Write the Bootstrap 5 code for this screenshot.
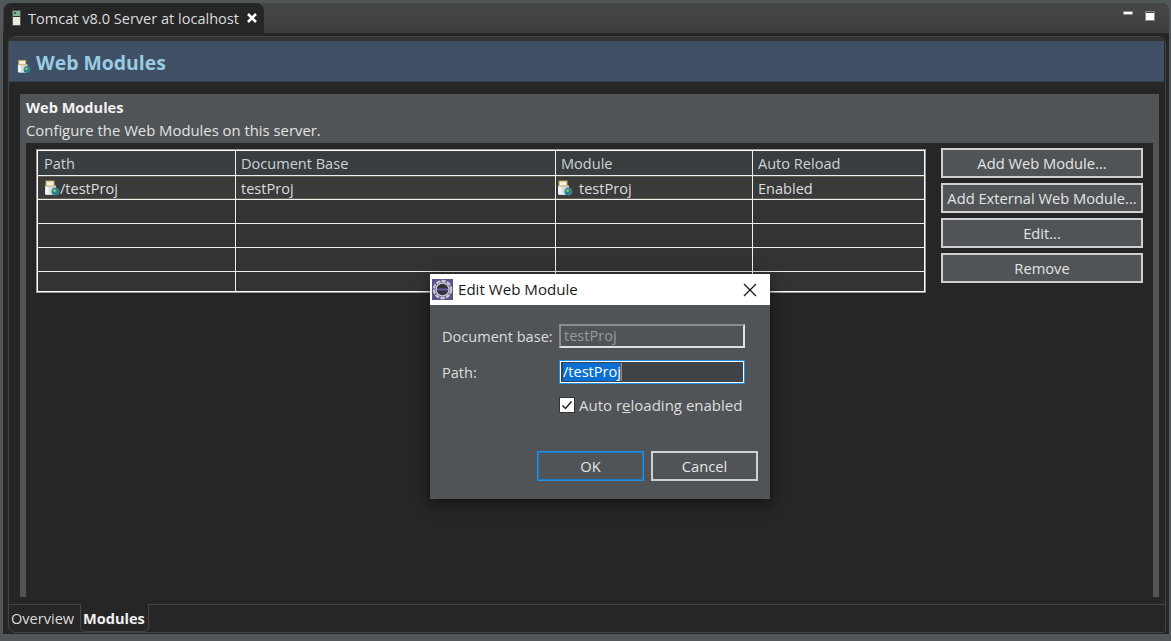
<!DOCTYPE html>
<html lang="en">
<head>
<meta charset="utf-8">
<title>Tomcat v8.0 Server at localhost</title>
<link href="https://cdn.jsdelivr.net/npm/bootstrap@5.3.0/dist/css/bootstrap.min.css" rel="stylesheet">
<style>
html,body{height:641px;overflow:hidden}
body{background:#515658;color:#ddd;font-family:"Open Sans","Noto Sans","Liberation Sans",sans-serif;font-size:14.55px;line-height:20px;position:relative}
.shell{height:631px;margin:3px 2px 7px 3px;background:#262626;border-radius:8px 8px 0 0;display:flex;flex-direction:column}
.strip{height:30px;flex:none;background:linear-gradient(#474747,#3d3d3d);border-radius:8px 8px 0 0;display:flex;justify-content:space-between}
.etab{width:260px;background:#262626;border-radius:8px 8px 0 0;display:flex;align-items:center;padding:0 0 0 8px;gap:7px;color:#ddd;white-space:nowrap;margin-left:1px}
.closex{flex:none;margin-left:1px}
.winbtns{display:flex;gap:12px;padding:8px 14px 0 0;align-items:flex-start}
.editor{flex:1;margin:3px 3px 1px 5px;border:1px solid #444;border-radius:8px 8px 3px 8px;background:#262626;display:flex;flex-direction:column;min-height:0}
.formhead{flex:none;border-top:4px solid #333;background:#3f5064;height:45px;border-bottom:1px solid #36424f;display:flex;align-items:center;gap:5px;padding:4px 0 0 8px;color:#9acbe4;font-size:19.4px;font-weight:700;margin-right:1px}
.formhead svg{margin-top:6px}
.sectwrap{flex:1;padding:12px 6px 7px 11px;min-height:0}
.sect{height:100%;background:#505457;padding:0 6px;display:flex;flex-direction:column}
.secttitle{font-weight:700;color:#f2f2f2;height:26px;padding-top:3px;line-height:20px;flex:none}
.sectdesc{height:23px;line-height:20px;color:#e2e2e2;flex:none;font-size:14.85px}
.sectbody{flex:1;background:#262626;padding:6px 10px 0 10px;display:flex;gap:15px;align-items:flex-start}
.mods{width:890px;height:144px;border:1px solid #9a9a9a;flex:none;display:grid;grid-template-columns:199px 320px 197px 1fr;grid-template-rows:26px repeat(4,24px) 20px;background:#333;box-shadow:inset 0 0 0 1px #fff}
.cellx{border-right:1px solid #eee;border-bottom:1px solid #eee;padding:0 0 0 5px;white-space:nowrap;overflow:hidden;display:flex;align-items:center;color:#ddd}
.cellx.headc{background:#383d40;margin-top:1px;color:#cfd3d6}
.cellx.sel{background:#3a3a3a;box-shadow:inset 0 1px #5f5f50,inset 0 -1px #5f5f50}
.cellx:nth-child(4n+1){margin-left:1px;padding-left:6px}
.cellx:nth-child(4n){border-right:none;margin-right:1px}
.mods .shortc{border-bottom:none;margin-bottom:1px}
.sidebtns{width:202px;display:flex;flex-direction:column;gap:5px;margin-top:-1px}
.eclbtn{--bs-btn-padding-y:0;--bs-btn-padding-x:0;--bs-btn-border-radius:0;height:30px;width:100%;background:#505457;border:2px solid #cfcfcf;color:#e4e4e4;font-size:14.7px;line-height:26px;white-space:nowrap}
.bottabs{flex:none;height:28px;border-top:1px solid #444;display:flex;padding-left:0}
.btab{width:71px;padding:0 0 0 2px;line-height:26px;color:#ddd}
.btab.on{font-weight:700;color:#f0f0f0;border-left:1px solid #444;border-right:1px solid #444;border-bottom:1px solid #444;background:#262626;margin-top:-1px;padding:1px 0 0 2px;width:69px;border-radius:0 0 5px 5px}
.dlg{position:absolute;left:430px;top:274px;width:340px;height:225px;background:#505457;box-shadow:0 4px 14px rgba(0,0,0,.55);color:#ddd;font-size:14.55px}
.dlgtitle{height:31px;background:#fff;color:#1a1a1a;display:flex;align-items:center;padding:0 0 0 2px;gap:5px;font-size:15.1px}
.dlgtitle span{margin-top:-1px}
.dlgtitle svg:last-child{margin-left:auto;margin-right:13px}
.dlgbody{padding:19px 12px 0 12px}
.frow{display:flex;align-items:center;height:24px;margin-bottom:12px}
.flabel{width:117px;flex:none;white-space:nowrap;margin-top:-1px}
.fbox{width:186px;height:24px;flex:none;border:2px solid #e0e0e0;border-left-color:#8c8c8c;border-top-color:#8c8c8c;background:#505457;color:#9a9a9a;padding:0 0 0 3px;line-height:19px}
.fbox.act{background:#3f4347;border:1px solid #1e90e8;box-shadow:inset 0 0 0 1px #fff;padding:0 0 0 3px;color:#fff;display:flex;align-items:center}
.selt{background:#0a6fd0;height:18px;line-height:17px;color:#fff;border-right:1px solid #e8702a}
.chkrow{display:flex;align-items:center;gap:4px;margin:-1px 0 0 117px;height:20px;white-space:nowrap;font-size:15px}
.chk{width:16px;height:16px;background:#fff;border:1px solid #333;display:flex;align-items:center;justify-content:center;flex:none}
.dlgbtns{display:flex;justify-content:flex-end;gap:7px;margin:36px 0 0 0}
.dlgbtns .eclbtn{width:107px}
.dlgbtns .eclbtn.pri{border:1px solid #1e90e8;box-shadow:inset 0 0 0 1px #1e78c0,inset -1px -1px #fff}
.u{text-decoration:underline}
.gap3{margin-left:-4px;margin-right:6px;flex:none}
</style>
</head>
<body>
<svg width="0" height="0" class="d-none"><symbol id="wm" viewBox="0 0 16 16"><rect x="1" y="5" width="11" height="10" rx="1.5" fill="#d6deea"/><rect x="1.5" y="6" width="3" height="8" fill="#f3f6fa"/><rect x="2" y="1" width="8" height="5" fill="#f0efe0" stroke="#c0a64e"/><circle cx="11.5" cy="11.5" r="4" fill="#2f7f8f"/><circle cx="10.5" cy="10.5" r="1.6" fill="#8cc45a"/></symbol></svg>
<div class="shell">
  <div class="strip">
    <div class="etab">
      <svg width="9" height="16" viewBox="0 0 9 16"><rect width="9" height="16" fill="#555"/><rect x="1" y="1" width="7" height="5" fill="#7fb59b"/><rect x="1" y="7" width="7" height="8" fill="#e8ecd8"/><rect x="2" y="2" width="2" height="2" fill="#1f6b4f"/><rect x="1" y="6" width="7" height="1" fill="#333"/></svg>
      <span>Tomcat v8.0 Server at localhost</span>
      <svg class="closex" width="10" height="10" viewBox="0 0 10 10"><path d="M1 1 9 9M9 1 1 9" stroke="#fff" stroke-width="2.6"/></svg>
    </div>
    <div class="winbtns">
      <svg width="10" height="5" viewBox="0 0 10 5"><rect x=".5" y=".5" width="9" height="3" fill="#fff" stroke="#888"/></svg>
      <svg width="10" height="10" viewBox="0 0 10 10"><rect x=".5" y=".5" width="9" height="9" fill="#fff" stroke="#888"/><rect x="1" y="1" width="8" height="1" fill="#444"/></svg>
    </div>
  </div>
  <div class="editor">
    <div class="formhead">
      <svg width="14" height="15"><use href="#wm"/></svg>
      <span>Web Modules</span>
    </div>
    <div class="sectwrap">
      <div class="sect">
        <div class="secttitle">Web Modules</div>
        <div class="sectdesc">Configure the Web Modules on this server.</div>
        <div class="sectbody">
          <div class="mods">
            <div class="cellx headc">Path</div><div class="cellx headc">Document Base</div><div class="cellx headc">Module</div><div class="cellx headc">Auto Reload</div>
            <div class="cellx sel"><svg width="16" height="16" class="flex-none"><use href="#wm"/></svg>/testProj</div>
            <div class="cellx sel">testProj</div>
            <div class="cellx sel"><svg width="16" height="16" class="gap3"><use href="#wm"/></svg>testProj</div>
            <div class="cellx sel">Enabled</div>
            <div class="cellx"></div><div class="cellx"></div><div class="cellx"></div><div class="cellx"></div>
            <div class="cellx"></div><div class="cellx"></div><div class="cellx"></div><div class="cellx"></div>
            <div class="cellx"></div><div class="cellx"></div><div class="cellx"></div><div class="cellx"></div>
            <div class="cellx shortc"></div><div class="cellx shortc"></div><div class="cellx shortc"></div><div class="cellx shortc"></div>
          </div>
          <div class="sidebtns">
            <button type="button" class="btn eclbtn">Add Web Module...</button>
            <button type="button" class="btn eclbtn">Add External Web Module...</button>
            <button type="button" class="btn eclbtn">Edit...</button>
            <button type="button" class="btn eclbtn">Remove</button>
          </div>
        </div>
      </div>
    </div>
    <div class="bottabs">
      <div class="btab">Overview</div>
      <div class="btab on">Modules</div>
    </div>
  </div>
</div>
<div class="dlg">
  <div class="dlgtitle">
    <svg width="21" height="21" viewBox="0 0 21 21"><rect width="21" height="21" fill="#5f5088"/><circle cx="10.5" cy="10.5" r="8.6" fill="none" stroke="#c8c8d2" stroke-width="2.2" stroke-dasharray="4.4 1.2"/><circle cx="10.5" cy="10.5" r="7.2" fill="#c8c8d2"/><circle cx="10.5" cy="10.5" r="5.8" fill="#33333c"/><rect x="5" y="9.5" width="11" height="2" fill="#6a5aa0"/></svg>
    <span>Edit Web Module</span>
    <svg width="14" height="14" viewBox="0 0 14 14"><path d="M1 1 13 13M13 1 1 13" stroke="#111" stroke-width="1.2"/></svg>
  </div>
  <div class="dlgbody">
    <div class="frow"><span class="flabel">Document base:</span><div class="fbox">testProj</div></div>
    <div class="frow"><span class="flabel">Path:</span><div class="fbox act"><span class="selt">/testProj</span></div></div>
    <div class="chkrow"><span class="chk"><svg width="12" height="12" viewBox="0 0 12 12"><path d="M1.5 6.5 4.5 9.5 10.5 2.5" fill="none" stroke="#222" stroke-width="1.5"/></svg></span><span>Auto r<span class="u">e</span>loading enabled</span></div>
    <div class="dlgbtns">
      <button type="button" class="btn eclbtn pri">OK</button>
      <button type="button" class="btn eclbtn">Cancel</button>
    </div>
  </div>
</div>
</body>
</html>
